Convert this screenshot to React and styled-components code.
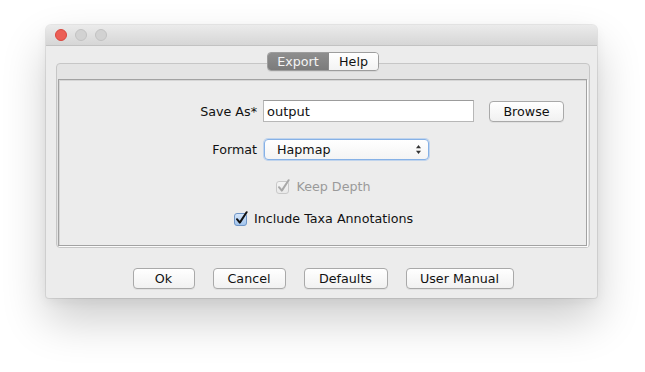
import React from "react";
import styled, { createGlobalStyle } from "styled-components";

const Global = createGlobalStyle`
  html, body { margin: 0; padding: 0; background: #ffffff; }
  body { font-family: "DejaVu Sans", "Liberation Sans", sans-serif; font-size: 12.7px; color: #111; }
`;

const Stage = styled.div`
  width: 645px;
  height: 372px;
  padding: 25px 0 0 46px;
  box-sizing: border-box;
`;

const Window = styled.div`
  width: 551px;
  height: 273px;
  box-sizing: border-box;
  background: #ececec;
  border-radius: 5px 5px 3px 3px;
  box-shadow: 0 0 0 1px rgba(0, 0, 0, 0.08), 0 22px 45px rgba(0, 0, 0, 0.2), 0 4px 12px rgba(0, 0, 0, 0.05);
  display: flex;
  flex-direction: column;
  overflow: hidden;
`;

const TitleBar = styled.div`
  height: 22px;
  box-sizing: border-box;
  background: linear-gradient(#ebebeb, #d6d6d6);
  border-bottom: 1px solid #c2c2c2;
  display: flex;
  align-items: center;
  gap: 8px;
  padding-left: 9px;
`;

const Light = styled.span`
  width: 12px;
  height: 12px;
  border-radius: 50%;
  box-sizing: border-box;
  background: ${(p) => (p.$red ? "#ec5f56" : "#d2d2d2")};
  border: 1px solid ${(p) => (p.$red ? "#d9473e" : "#c2c2c2")};
`;

const Body = styled.div`
  flex: 1;
  display: flex;
  flex-direction: column;
  padding: 6px 7px 9px 10px;
`;

const Tabs = styled.div`
  position: relative;
  z-index: 1;
  align-self: center;
  display: flex;
  height: 19px;
  margin-bottom: -8px;
  border: 1px solid #9d9d9d;
  border-radius: 4px;
  overflow: hidden;
  box-sizing: border-box;
  box-shadow: 0 1px 0 rgba(0,0,0,0.06);
`;

const Tab = styled.div`
  width: ${(p) => p.$w}px;
  display: flex;
  align-items: center;
  justify-content: center;
  font-size: 12.7px;
  color: ${(p) => (p.$active ? "#f4f4f4" : "#111")};
  background: ${(p) => (p.$active ? "linear-gradient(#8e8e8e, #7b7b7b)" : "linear-gradient(#ffffff, #f3f3f3)")};
  & + & { border-left: 1px solid #8a8a8a; }
`;

const Pane = styled.div`
  height: 185px;
  box-sizing: border-box;
  border: 1px solid #c6c6c6;
  border-radius: 4px;
  background: #e4e4e4;
  padding: 15px 2px 1px 1px;
  display: flex;
`;

const Inner = styled.div`
  flex: 1;
  box-sizing: border-box;
  background: #ececec;
  border: 1px solid #a2a2a2;
  box-shadow: 1px 1px 0 #fbfbfb, inset 1px 1px 0 #d6d6d6;
  display: flex;
  flex-direction: column;
  padding-top: 20px;
`;

const FormGrid = styled.div`
  display: grid;
  grid-template-columns: 198px 211px 75px;
  column-gap: 6px;
  row-gap: 17px;
  align-items: center;
`;

const Label = styled.label`
  justify-self: end;
  font-size: 12.7px;
  color: #111;
`;

const TextField = styled.div`
  height: 22px;
  box-sizing: border-box;
  background: #fff;
  border: 1px solid #b7b7b7;
  border-top-color: #9c9c9c;
  padding-left: 3px;
  display: flex;
  align-items: center;
  font-size: 13px;
`;

const Button = styled.div`
  width: ${(p) => p.$w}px;
  height: 21px;
  box-sizing: border-box;
  border: 1px solid #a9a9a9;
  border-radius: 4px;
  background: linear-gradient(#ffffff, #f1f1f1);
  box-shadow: 0 1px 0 rgba(0, 0, 0, 0.05);
  display: flex;
  align-items: center;
  justify-content: center;
  font-size: 12.7px;
  color: #111;
  white-space: nowrap;
`;

const BrowseButton = styled(Button)`
  margin-left: 9px;
`;

const Select = styled.div`
  width: 165px;
  height: 21px;
  margin-left: 1px;
  box-sizing: border-box;
  border: 1px solid #86b1e6;
  border-radius: 4px;
  background: linear-gradient(#ffffff, #f4f4f4);
  box-shadow: 0 0 0 1px rgba(140, 185, 240, 0.45);
  display: flex;
  align-items: center;
  justify-content: space-between;
  padding: 0 6px 0 12px;
  font-size: 12.7px;
`;

const CheckRow = styled.div`
  align-self: center;
  margin-left: 2px;
  display: flex;
  align-items: center;
  gap: 5px;
  height: 16px;
  margin-top: ${(p) => p.$mt}px;
  font-size: 12.7px;
  color: ${(p) => (p.$disabled ? "#9a9a9a" : "#111")};
`;

const Footer = styled.div`
  display: flex;
  justify-content: center;
  gap: 18px;
  margin-top: 20px;
`;

const Arrows = () => (
  <svg width="7" height="11" viewBox="0 0 7 11">
    <path d="M3.5 1 L6 4.2 L1 4.2 Z" fill="#333" />
    <path d="M3.5 10 L6 6.8 L1 6.8 Z" fill="#333" />
  </svg>
);

const CheckBox = ({ disabled }) => (
  <svg width="15" height="15" viewBox="0 0 15 15">
    <defs>
      <linearGradient id={disabled ? "cbd" : "cbe"} x1="0" y1="0" x2="0" y2="1">
        <stop offset="0" stopColor={disabled ? "#f4f4f4" : "#d7e7fa"} />
        <stop offset="1" stopColor={disabled ? "#e9e9e9" : "#9fc2ec"} />
      </linearGradient>
    </defs>
    <rect x="0.5" y="2.5" width="12" height="12" rx="2.5"
      fill={`url(#${disabled ? "cbd" : "cbe"})`}
      stroke={disabled ? "#c9c9c9" : "#6f95c6"} />
    <path d="M3 8.2 L5.8 11.6 L12.6 1.2" fill="none"
      stroke={disabled ? "#a8a8a8" : "#111"} strokeWidth="2" strokeLinecap="round" strokeLinejoin="round" />
  </svg>
);

export default function App() {
  return (
    <Stage>
      <Global />
      <Window>
        <TitleBar>
          <Light $red />
          <Light />
          <Light />
        </TitleBar>
        <Body>
          <Tabs>
            <Tab $active $w={60}>Export</Tab>
            <Tab $w={49}>Help</Tab>
          </Tabs>
          <Pane>
            <Inner>
              <FormGrid>
                <Label>Save As*</Label>
                <TextField>output</TextField>
                <BrowseButton $w={75}>Browse</BrowseButton>
                <Label>Format</Label>
                <Select>
                  <span>Hapmap</span>
                  <Arrows />
                </Select>
              </FormGrid>
              <CheckRow $mt={18} $disabled>
                <CheckBox disabled />
                <span>Keep Depth</span>
              </CheckRow>
              <CheckRow $mt={16}>
                <CheckBox />
                <span>Include Taxa Annotations</span>
              </CheckRow>
            </Inner>
          </Pane>
          <Footer>
            <Button $w={62}>Ok</Button>
            <Button $w={73}>Cancel</Button>
            <Button $w={84}>Defaults</Button>
            <Button $w={108}>User Manual</Button>
          </Footer>
        </Body>
      </Window>
    </Stage>
  );
}
